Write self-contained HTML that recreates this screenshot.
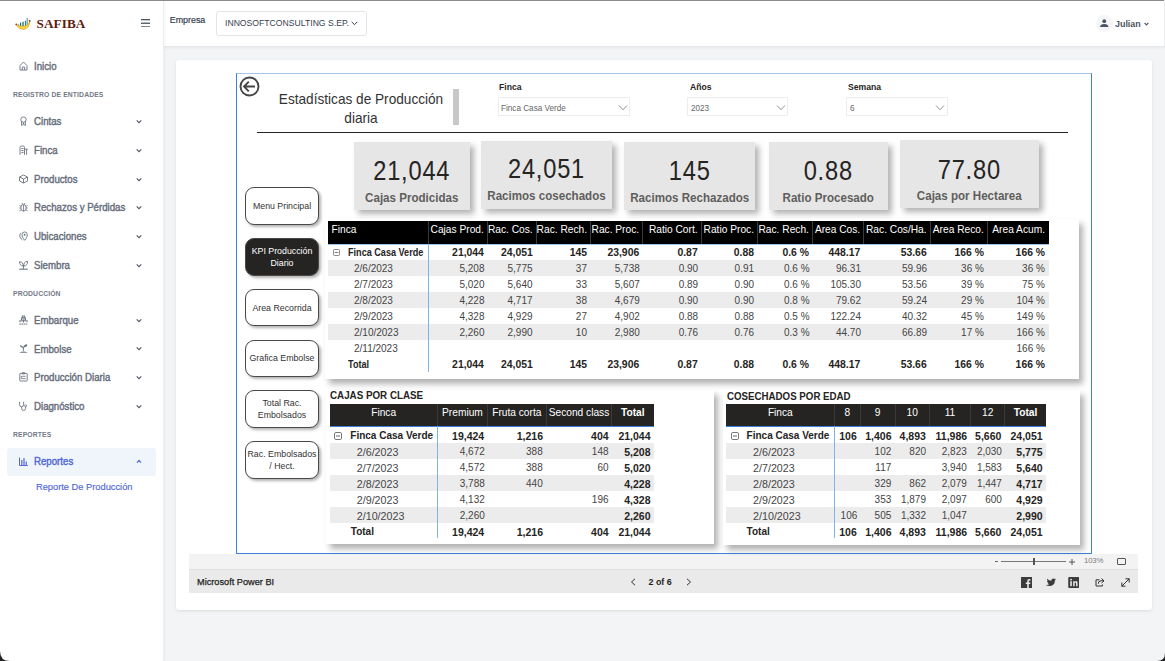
<!DOCTYPE html>
<html><head><meta charset="utf-8">
<style>
*{margin:0;padding:0;box-sizing:border-box}
html,body{width:1165px;height:661px;overflow:hidden}
body{position:relative;background:#f3f4f6;font-family:"Liberation Sans",sans-serif;color:#333}
.a{position:absolute;white-space:nowrap}
#topline{position:absolute;left:0;top:0;width:1165px;height:1px;background:#8a8a8a;z-index:50}
#sidebar{position:absolute;left:0;top:0;width:162.5px;height:661px;background:#fff;box-shadow:1px 0 0 #eceef1,2px 0 3px rgba(0,0,0,.04);z-index:5}
#header{position:absolute;left:163px;top:0;width:1002px;height:46px;background:#fff;box-shadow:0 1px 0 #e6e8eb,0 2px 3px rgba(0,0,0,.05);z-index:4}
.nav{position:absolute;left:0;width:163px;height:20px}
.nav .t{position:absolute;left:34px;top:5.3px;font-size:10.4px;font-weight:400;color:#666d7b;-webkit-text-stroke:.4px #666d7b;transform:scaleX(.93);transform-origin:0 0}
.nav .ic{position:absolute;left:19px;top:4.5px;width:9px;height:10px}
.nav .ch{position:absolute;left:136.3px;top:7.8px;width:6px;height:5px}
.sec{position:absolute;left:13px;font-size:6.8px;font-weight:700;color:#737a87;letter-spacing:.12px;margin-top:.7px}
#card{position:absolute;left:175.8px;top:59.5px;width:976.2px;height:550.5px;background:#fff;border-radius:3px;box-shadow:0 1px 3px rgba(0,0,0,.1)}
#blue{position:absolute;left:236px;top:73px;width:855.8px;height:481px;border:1.3px solid #3f80dc;border-top:1.1px solid #a6c6ee}
.kpi{position:absolute;top:142px;height:68px;background:#e6e6e6;box-shadow:4px 4px 6px rgba(0,0,0,.3)}
.kpi .v{position:absolute;left:0;right:0;top:12.7px;text-align:center;font-size:27.5px;color:#252423;letter-spacing:.9px;transform:scaleX(.86)}
.kpi .l{position:absolute;left:0;right:0;top:48.6px;text-align:center;font-size:12.2px;font-weight:700;color:#605e5c;transform:scaleX(.95)}
.btn{position:absolute;left:245px;width:74px;height:38px;border:1px solid #4a4948;border-radius:9px;background:#fff;box-shadow:2px 2px 3px rgba(0,0,0,.3);font-size:8.8px;color:#333;text-align:center;display:flex;align-items:center;justify-content:center;line-height:12px}
.btn.on{background:#252423;color:#fff}
.dd{position:absolute;top:97.3px;height:18.5px;border:1px solid #ededed;background:#fff}
.dd .tx{position:absolute;left:2.8px;top:4.2px;font-size:9.4px;color:#666;transform:scaleX(.87);transform-origin:0 0}
.ddl{position:absolute;top:80.6px;font-size:9.7px;font-weight:700;color:#252423;transform:scaleX(.89);transform-origin:0 0}
table{border-collapse:collapse;table-layout:fixed;position:absolute}
td,th{white-space:nowrap;overflow:visible;padding:0 3.5px;height:16px;text-align:right;font-size:10px;color:#333;font-weight:400}
</style></head><body>
<div id="topline"></div>
<div class="a" style="left:1164px;top:0;width:1px;height:46px;background:#eceef0;z-index:55"></div>

<!-- SIDEBAR -->
<div id="sidebar">
  <!-- logo -->
  <svg class="a" style="left:12px;top:14px" width="24" height="20" viewBox="0 0 24 20">
    <rect x="6.2" y="9.8" width="1.1" height="2" fill="#7fb8b8"/>
    <rect x="8" y="8.6" width="1.2" height="3.4" fill="#1f6f72"/>
    <rect x="10.4" y="7.8" width="1.3" height="4.2" fill="#1f6f72"/>
    <rect x="12.9" y="6.8" width="1.2" height="5" fill="#2f7f82"/>
    <rect x="14.5" y="4" width="1.5" height="7.5" fill="#7fb5b5"/>
    <path d="M4 10.2 Q6.5 15 11.5 15.3 Q16.8 15 17.9 7.2 Q16 12 11.5 12.6 Q7.2 12.8 4 10.2Z" fill="#f6df3f" stroke="#e69a1e" stroke-width=".8"/>
    <circle cx="4.3" cy="10.4" r=".9" fill="#9a4b12"/>
    <circle cx="17.6" cy="6.8" r=".9" fill="#7a3a10"/>
  </svg>
  <div class="a" style="left:36.5px;top:16px;font-family:'Liberation Serif',serif;font-weight:700;font-size:13.2px;color:#621a0e;letter-spacing:.1px">SAFIBA</div>
  <svg class="a" style="left:141px;top:18.7px" width="9.2" height="8.8" viewBox="0 0 9.2 8.8"><rect y="0" width="9.2" height="1.3" fill="#4b5563"/><rect y="3.6" width="9.2" height="1.3" fill="#4b5563"/><rect y="7.3" width="9.2" height="1.3" fill="#4b5563"/></svg>

  <div class="nav" style="top:56px"><svg class="ic" viewBox="0 0 9 10"><path d="M1 4.5 L4.5 1 L8 4.5 V9 H1Z M3.3 9 V6 H5.7 V9" stroke="#6b7280" stroke-width=".9" fill="none"/></svg><div class="t">Inicio</div></div>
  <div class="sec" style="top:90px">REGISTRO DE ENTIDADES</div>

  <div class="nav" style="top:111px"><svg class="ic" viewBox="0 0 9 10"><circle cx="4.5" cy="3.6" r="2.7" stroke="#6b7280" stroke-width=".9" fill="none"/><path d="M2.6 5.6 V9.5 L4.5 8.3 L6.4 9.5 V5.6 M4.5 6.4 V8.3" stroke="#6b7280" stroke-width=".9" fill="none"/></svg><div class="t">Cintas</div><svg class="ch" viewBox="0 0 6 5"><path d="M.7 1.3 L3 3.6 L5.3 1.3" stroke="#4b5563" stroke-width="1.1" fill="none"/></svg></div>
  <div class="nav" style="top:140px"><svg class="ic" viewBox="0 0 9 10"><path d="M1 9.8 V2.5 Q1 1 2.5 1 H4 Q5.5 1 5.5 2.5 V9.8 M2.3 3.6 H4.5 M2.3 5.6 H4.5 M2.3 7.6 H4.5 M5.5 4.2 H8.8 M7.6 4.2 V9.8" stroke="#6b7280" stroke-width=".9" fill="none"/></svg><div class="t">Finca</div><svg class="ch" viewBox="0 0 6 5"><path d="M.7 1.3 L3 3.6 L5.3 1.3" stroke="#4b5563" stroke-width="1.1" fill="none"/></svg></div>
  <div class="nav" style="top:169px"><svg class="ic" viewBox="0 0 9 10"><path d="M4.5 1 L8.5 3 V7 L4.5 9 L.5 7 V3Z M.5 3 L4.5 5 L8.5 3 M4.5 5 V9" stroke="#6b7280" stroke-width=".9" fill="none"/></svg><div class="t">Productos</div><svg class="ch" viewBox="0 0 6 5"><path d="M.7 1.3 L3 3.6 L5.3 1.3" stroke="#4b5563" stroke-width="1.1" fill="none"/></svg></div>
  <div class="nav" style="top:197px"><svg class="ic" viewBox="0 0 9 10"><ellipse cx="4.5" cy="5.8" rx="2.6" ry="3.4" stroke="#6b7280" stroke-width=".9" fill="none"/><path d="M3 1 L3.6 2.5 M6 1 L5.4 2.5 M.3 3.5 L1.9 4.3 M.2 6 H1.9 M.3 9 L2 7.8 M8.7 3.5 L7.1 4.3 M8.8 6 H7.1 M8.7 9 L7 7.8 M4.5 3 V9.2" stroke="#6b7280" stroke-width=".8" fill="none"/></svg><div class="t">Rechazos y Pérdidas</div><svg class="ch" viewBox="0 0 6 5"><path d="M.7 1.3 L3 3.6 L5.3 1.3" stroke="#4b5563" stroke-width="1.1" fill="none"/></svg></div>
  <div class="nav" style="top:226px"><svg class="ic" viewBox="0 0 9 10"><path d="M5.65 9.3 C3.7 7.1 3 5.6 3 3.6 A2.65 2.65 0 0 1 8.3 3.6 C8.3 5.6 7.6 7.1 5.65 9.3Z M2.1 1.9 C.1 3.2 .2 6.6 3.5 9.1" stroke="#6b7280" stroke-width=".9" fill="none"/><circle cx="5.65" cy="3.7" r=".95" fill="#6b7280"/></svg><div class="t">Ubicaciones</div><svg class="ch" viewBox="0 0 6 5"><path d="M.7 1.3 L3 3.6 L5.3 1.3" stroke="#4b5563" stroke-width="1.1" fill="none"/></svg></div>
  <div class="nav" style="top:255px"><svg class="ic" viewBox="0 0 9 10"><path d="M4.2 6 C1.6 6 .6 4.2 .6 1.7 C3 1.7 4.2 3.2 4.2 6Z M4.7 6 C7.6 6 8.6 3.8 8.6 1.3 C5.8 1.3 4.7 3.2 4.7 6Z M4.45 5 V9" stroke="#6b7280" stroke-width=".9" fill="none"/><path d="M.3 9.2 H8.7" stroke="#6b7280" stroke-width="1.1"/></svg><div class="t">Siembra</div><svg class="ch" viewBox="0 0 6 5"><path d="M.7 1.3 L3 3.6 L5.3 1.3" stroke="#4b5563" stroke-width="1.1" fill="none"/></svg></div>
  <div class="sec" style="top:289px">PRODUCCIÓN</div>
  <div class="nav" style="top:310px"><svg class="ic" viewBox="0 0 9 10"><rect x="3.3" y="1" width="2.4" height="1.8" stroke="#6b7280" stroke-width=".9" fill="none"/><rect x="2.4" y="2.9" width="4.2" height="2" stroke="#6b7280" stroke-width=".9" fill="none"/><path d="M.4 5.8 H8.6 L7.6 7.2 M.4 5.8 L1.4 7.2 M4.5 5 V7.6" stroke="#6b7280" stroke-width=".9" fill="none"/><path d="M.3 9.1 H8.7" stroke="#6b7280" stroke-width="1" stroke-dasharray="1.6 .5" fill="none"/></svg><div class="t">Embarque</div><svg class="ch" viewBox="0 0 6 5"><path d="M.7 1.3 L3 3.6 L5.3 1.3" stroke="#4b5563" stroke-width="1.1" fill="none"/></svg></div>
  <div class="nav" style="top:338.5px"><svg class="ic" viewBox="0 0 9 10"><path d="M4.4 7.8 V3.6" stroke="#6b7280" stroke-width="1" fill="none"/><path d="M4.2 4.8 Q1.2 5.3 .9 2.2 Q3.8 2 4.2 4.8Z M4.6 4.3 Q8.2 4.8 8.2 1.3 Q5 1.2 4.6 4.3Z" fill="#6b7280"/><path d="M.2 9.8 Q4.5 7.4 8.8 9.8Z" fill="#6b7280"/></svg><div class="t">Embolse</div><svg class="ch" viewBox="0 0 6 5"><path d="M.7 1.3 L3 3.6 L5.3 1.3" stroke="#4b5563" stroke-width="1.1" fill="none"/></svg></div>
  <div class="nav" style="top:367px"><svg class="ic" viewBox="0 0 9 10"><rect x=".8" y="1.4" width="7.4" height="7.6" rx=".6" stroke="#6b7280" stroke-width=".9" fill="none"/><path d="M3.3 .6 H5.7 V2 H3.3Z M2.3 4.3 H6.7 M2.3 6.6 H6.7 M2.3 4.3 V6.6" stroke="#6b7280" stroke-width=".8" fill="none"/></svg><div class="t">Producción Diaria</div><svg class="ch" viewBox="0 0 6 5"><path d="M.7 1.3 L3 3.6 L5.3 1.3" stroke="#4b5563" stroke-width="1.1" fill="none"/></svg></div>
  <div class="nav" style="top:396px"><svg class="ic" viewBox="0 0 9 10"><path d="M.6 .8 V3.8 A2 2 0 0 0 4.6 3.8 V.8 M2.6 5.8 V7.4 A1.9 1.9 0 0 0 6.6 7.4 V5.8" stroke="#6b7280" stroke-width=".9" fill="none"/><circle cx="6.6" cy="4.8" r="1" stroke="#6b7280" stroke-width=".8" fill="none"/></svg><div class="t">Diagnóstico</div><svg class="ch" viewBox="0 0 6 5"><path d="M.7 1.3 L3 3.6 L5.3 1.3" stroke="#4b5563" stroke-width="1.1" fill="none"/></svg></div>
  <div class="sec" style="top:430px">REPORTES</div>
  <div class="a" style="left:6.5px;top:447.5px;width:149.5px;height:28px;background:#f0f5fb;border-radius:3px"></div>
  <div class="nav" style="top:451px"><svg class="ic" viewBox="0 0 9 10"><path d="M.5 1.5 V9.5 H8.8" stroke="#5469d4" stroke-width="1" fill="none"/><rect x="2.2" y="4" width="1.2" height="5" fill="#5469d4"/><rect x="4.4" y="2" width="1.2" height="7" fill="#5469d4"/><rect x="6.6" y="5.5" width="1.2" height="3.5" fill="#5469d4"/></svg><div class="t" style="color:#4f67d6;-webkit-text-stroke:.4px #4f67d6">Reportes</div><svg class="ch" viewBox="0 0 5 5"><path d="M.5 3.6 L2.5 1.5 L4.5 3.6" stroke="#5469d4" stroke-width="1.3" fill="none"/></svg></div>
  <div class="a" style="left:36px;top:481.1px;font-size:9.9px;color:#4f67d6;transform:scaleX(.94);transform-origin:0 0;-webkit-text-stroke:.15px #4f67d6">Reporte De Producción</div>
</div>

<!-- HEADER -->
<div id="header">
  <div class="a" style="left:6.8px;top:14.5px;font-size:8.9px;color:#374151;-webkit-text-stroke:.2px #374151">Empresa</div>
  <div class="a" style="left:53.3px;top:10.6px;width:150.5px;height:25px;border:1px solid #e3e5e9;border-radius:3px;background:#fff"></div>
  <div class="a" style="left:61.8px;top:17px;font-size:9.6px;color:#374151;transform:scaleX(.9);transform-origin:0 0">INNOSOFTCONSULTING S.EP.</div>
  <svg class="a" style="left:187.5px;top:21px" width="7" height="5" viewBox="0 0 7 5"><path d="M.6 .8 L3.5 3.7 L6.4 .8" stroke="#374151" stroke-width="1" fill="none"/></svg>
  <div class="a" style="left:933px;top:14.8px;width:16.5px;height:17px;border-radius:50%;background:#f5f6f8"></div>
  <svg class="a" style="left:937px;top:18.5px" width="8.5" height="8.5" viewBox="0 0 8 8"><circle cx="4" cy="2" r="1.8" fill="#4b5563"/><path d="M0 8 Q0 4.6 4 4.6 Q8 4.6 8 8Z" fill="#4b5563"/></svg>
  <div class="a" style="left:951.5px;top:17.5px;font-size:9.4px;font-weight:700;color:#4b5563;transform:scaleX(.95);transform-origin:0 0">Julian</div>
  <svg class="a" style="left:980.5px;top:22px" width="5" height="4" viewBox="0 0 5 4"><path d="M.6 .8 L2.5 2.8 L4.4 .8" stroke="#4b5563" stroke-width="1.2" fill="none"/></svg>
</div>

<!-- CARD -->
<div id="card"></div>
<!-- pbi bars -->
<div class="a" style="left:189px;top:554px;width:949px;height:15px;background:#f3f3f3"></div>
<div class="a" style="left:189px;top:569px;width:949px;height:24px;background:#eaeaea;border-top:1px solid #dedede"></div>
<div class="a" style="left:197px;top:576.5px;font-size:9.2px;color:#1e1e1e;-webkit-text-stroke:.25px #1e1e1e">Microsoft Power BI</div>
<svg class="a" style="left:630px;top:578px" width="6" height="8" viewBox="0 0 6 8"><path d="M5 .8 L1.5 4 L5 7.2" stroke="#333" stroke-width="1" fill="none"/></svg>
<div class="a" style="left:648.5px;top:577px;font-size:8.9px;font-weight:700;color:#252423">2 of 6</div>
<svg class="a" style="left:685.5px;top:578px" width="6" height="8" viewBox="0 0 6 8"><path d="M1 .8 L4.5 4 L1 7.2" stroke="#333" stroke-width="1" fill="none"/></svg>
<!-- zoom bar -->
<div class="a" style="left:995px;top:561px;width:3px;height:1px;background:#666"></div>
<div class="a" style="left:1001px;top:561px;width:64.5px;height:1px;background:#777"></div>
<div class="a" style="left:1032.8px;top:558px;width:2.6px;height:6.5px;background:#555"></div>
<svg class="a" style="left:1069px;top:558.5px" width="6" height="6" viewBox="0 0 6 6"><path d="M0 3 H6 M3 0 V6" stroke="#555" stroke-width="1"/></svg>
<div class="a" style="left:1084px;top:556.3px;font-size:7.8px;color:#7c7c7c;letter-spacing:-.2px">103%</div>
<div class="a" style="left:1117px;top:558px;width:9px;height:6.8px;border:1px solid #555;border-left-width:1.6px;border-right-width:1.6px;border-radius:1px"></div>
<!-- footer icons -->
<svg class="a" style="left:1021px;top:577px" width="11" height="11" viewBox="0 0 11 11"><rect width="11" height="11" fill="#3b3b3b"/><path d="M7.8 11 V7 H9.2 L9.5 5.4 H7.8 V4.4 Q7.8 3.6 8.6 3.6 H9.5 V2.2 Q8.9 2.1 8.2 2.1 Q6.2 2.1 6.2 4.2 V5.4 H4.8 V7 H6.2 V11Z" fill="#eaeaea"/></svg>
<svg class="a" style="left:1044.5px;top:577.5px" width="11" height="9.5" viewBox="0 0 24 20"><path d="M24 2.4 Q22.9 2.9 21.7 3 Q23 2.2 23.5 .8 Q22.3 1.5 20.9 1.8 Q19.7 .5 17.9 .5 Q14.1 .5 13.9 4.6 Q13.9 5.1 14 5.5 Q8.4 5.2 4.9 1 Q3.3 4 6.2 6.5 Q5.2 6.5 4.3 6 Q4.3 9.3 7.6 10 Q6.6 10.3 5.7 10.1 Q6.6 12.8 9.5 12.9 Q6.2 15.3 1.8 14.9 Q5.9 17.3 11 17 Q21.6 16.1 21.6 5.2 Q21.6 5 21.6 4.9 Q23 3.9 24 2.4Z" fill="#3b3b3b"/></svg>
<svg class="a" style="left:1067.5px;top:577px" width="11.5" height="11" viewBox="0 0 11 11"><rect width="11" height="11" rx="1" fill="#3b3b3b"/><rect x="2" y="4.2" width="1.6" height="5" fill="#eaeaea"/><circle cx="2.8" cy="2.6" r=".95" fill="#eaeaea"/><path d="M4.9 4.2 H6.4 V5 Q6.9 4.1 7.9 4.1 Q9.3 4.1 9.3 5.9 V9.2 H7.8 V6.3 Q7.8 5.4 7.1 5.4 Q6.4 5.4 6.4 6.3 V9.2 H4.9Z" fill="#eaeaea"/></svg>
<svg class="a" style="left:1094.5px;top:577px" width="10" height="10" viewBox="0 0 10 10"><path d="M6.5 1.5 L9 3.8 L6.5 6 M9 3.8 H6 Q3.2 3.8 3.2 6.8" stroke="#333" stroke-width="1" fill="none"/><path d="M4.5 2.8 H1 V9 H7.5 V7.5" stroke="#333" stroke-width="1" fill="none"/></svg>
<svg class="a" style="left:1120.5px;top:578px" width="9" height="9" viewBox="0 0 9 9"><path d="M.8 8.2 L8.2 .8 M4.5 .8 H8.2 V4.5 M.8 4.5 V8.2 H4.5" stroke="#333" stroke-width="1" fill="none"/></svg>
<!-- window corner -->
<svg class="a" style="left:0;top:651px;z-index:60" width="10" height="10" viewBox="0 0 10 10"><path d="M0 0 Q0 10 10 10 H0Z" fill="#222"/></svg>
<svg class="a" style="left:1157px;top:653px;z-index:60" width="8" height="8" viewBox="0 0 10 10"><path d="M10 0 Q10 10 0 10 H10Z" fill="#222"/></svg>

<div id="blue"></div>

<!-- REPORT CONTENT -->
<svg class="a" style="left:239px;top:76px" width="21" height="21" viewBox="0 0 21 21"><circle cx="10.5" cy="10.5" r="9" stroke="#454545" stroke-width="1.9" fill="none"/><path d="M5.2 10.5 H16 M9.8 5.6 L5 10.5 L9.8 15.4" stroke="#454545" stroke-width="1.9" fill="none"/></svg>
<div class="a" style="left:271.3px;top:90.1px;font-size:14.5px;color:#333;line-height:18.5px;text-align:center;width:180px;transform:scaleX(.94)">Estadísticas de Producción<br>diaria</div>
<div class="a" style="left:453px;top:89px;width:5.5px;height:36px;background:#c8c8c8"></div>
<div class="a" style="left:257px;top:131.5px;width:811px;height:1.8px;background:#252423"></div>

<div class="ddl" style="left:498.5px">Finca</div>
<div class="dd" style="left:497.5px;width:132.5px"><div class="tx">Finca Casa Verde</div><svg class="a" style="left:119px;top:6.5px" width="10" height="6" viewBox="0 0 10 6"><path d="M1 .5 L5 4.8 L9 .5" stroke="#888" stroke-width=".9" fill="none"/></svg></div>
<div class="ddl" style="left:689.5px">Años</div>
<div class="dd" style="left:687.3px;width:101px"><div class="tx">2023</div><svg class="a" style="left:87.5px;top:6.5px" width="10" height="6" viewBox="0 0 10 6"><path d="M1 .5 L5 4.8 L9 .5" stroke="#888" stroke-width=".9" fill="none"/></svg></div>
<div class="ddl" style="left:847.8px">Semana</div>
<div class="dd" style="left:846.3px;width:101.5px"><div class="tx">6</div><svg class="a" style="left:87.5px;top:6.5px" width="10" height="6" viewBox="0 0 10 6"><path d="M1 .5 L5 4.8 L9 .5" stroke="#888" stroke-width=".9" fill="none"/></svg></div>

<div class="kpi" style="left:354px;width:115.5px"><div class="v">21,044</div><div class="l">Cajas Prodicidas</div></div>
<div class="kpi" style="left:481px;width:131px;top:140.5px"><div class="v" style="top:12.8px">24,051</div><div class="l" style="top:48.6px">Racimos cosechados</div></div>
<div class="kpi" style="left:623.5px;width:131.5px"><div class="v">145</div><div class="l">Racimos Rechazados</div></div>
<div class="kpi" style="left:769px;width:118.5px"><div class="v">0.88</div><div class="l">Ratio Procesado</div></div>
<div class="kpi" style="left:900.4px;width:138.6px;top:140.4px"><div class="v" style="top:13.2px">77.80</div><div class="l" style="top:48.5px">Cajas por Hectarea</div></div>

<div class="btn" style="top:187px">Menu Principal</div>
<div class="btn on" style="top:238px;height:37.5px">KPI Producción<br>Diario</div>
<div class="btn" style="top:288.8px;height:37.5px">Area Recorrida</div>
<div class="btn" style="top:339.8px;height:37px">Grafica Embolse</div>
<div class="btn" style="top:390px;height:38px">Total Rac.<br>Embolsados</div>
<div class="btn" style="top:441px;height:37.5px">Rac. Embolsados<br>/ Hect.</div>

<!-- MAIN TABLE -->
<div class="a" style="left:325px;top:218.5px;width:753.5px;height:160px;background:#fff;box-shadow:4px 5px 6px rgba(0,0,0,.3)"></div>
<div class="a" style="left:328px;top:221px;width:720.5999999999999px;height:23px;background:#000"></div>
<div class="a" style="left:428.1px;top:221px;width:1px;height:23px;background:#3a3a3a"></div>
<div class="a" style="left:486.9px;top:221px;width:1px;height:23px;background:#3a3a3a"></div>
<div class="a" style="left:535.8px;top:221px;width:1px;height:23px;background:#3a3a3a"></div>
<div class="a" style="left:590.1px;top:221px;width:1px;height:23px;background:#3a3a3a"></div>
<div class="a" style="left:642.2px;top:221px;width:1px;height:23px;background:#3a3a3a"></div>
<div class="a" style="left:700.7px;top:221px;width:1px;height:23px;background:#3a3a3a"></div>
<div class="a" style="left:757.1px;top:221px;width:1px;height:23px;background:#3a3a3a"></div>
<div class="a" style="left:812.0px;top:221px;width:1px;height:23px;background:#3a3a3a"></div>
<div class="a" style="left:863.3px;top:221px;width:1px;height:23px;background:#3a3a3a"></div>
<div class="a" style="left:929.7px;top:221px;width:1px;height:23px;background:#3a3a3a"></div>
<div class="a" style="left:986.9px;top:221px;width:1px;height:23px;background:#3a3a3a"></div>
<div class="a" style="left:328px;top:260px;width:720.5999999999999px;height:16px;background:#ececec"></div>
<div class="a" style="left:328px;top:292px;width:720.5999999999999px;height:16px;background:#ececec"></div>
<div class="a" style="left:328px;top:324px;width:720.5999999999999px;height:16px;background:#ececec"></div>
<div class="a" style="left:328px;top:243.7px;width:720.5999999999999px;height:1.2px;background:#9cc6f3"></div>
<div class="a" style="left:427.90000000000003px;top:244px;width:1.3px;height:128px;background:#7fb3ec"></div>
<div class="a" style="left:328px;top:218.1px;width:100.60000000000002px;height:23px;line-height:23px;text-align:left;font-size:10.2px;color:#fff;padding-left:3.6px;">Finca</div>
<div class="a" style="left:428.6px;top:218.1px;width:58.799999999999955px;height:23px;line-height:23px;text-align:right;font-size:10.2px;color:#fff;padding-right:3.6px;">Cajas Prod.</div>
<div class="a" style="left:487.4px;top:218.1px;width:48.89999999999998px;height:23px;line-height:23px;text-align:right;font-size:10.2px;color:#fff;padding-right:3.6px;">Rac. Cos.</div>
<div class="a" style="left:536.3px;top:218.1px;width:54.30000000000007px;height:23px;line-height:23px;text-align:right;font-size:10.2px;color:#fff;padding-right:3.6px;">Rac. Rech.</div>
<div class="a" style="left:590.6px;top:218.1px;width:52.10000000000002px;height:23px;line-height:23px;text-align:right;font-size:10.2px;color:#fff;padding-right:3.6px;">Rac. Proc.</div>
<div class="a" style="left:642.7px;top:218.1px;width:58.5px;height:23px;line-height:23px;text-align:right;font-size:10.2px;color:#fff;padding-right:3.6px;">Ratio Cort.</div>
<div class="a" style="left:701.2px;top:218.1px;width:56.39999999999998px;height:23px;line-height:23px;text-align:right;font-size:10.2px;color:#fff;padding-right:3.6px;">Ratio Proc.</div>
<div class="a" style="left:757.6px;top:218.1px;width:54.89999999999998px;height:23px;line-height:23px;text-align:right;font-size:10.2px;color:#fff;padding-right:3.6px;">Rac. Rech.</div>
<div class="a" style="left:812.5px;top:218.1px;width:51.299999999999955px;height:23px;line-height:23px;text-align:right;font-size:10.2px;color:#fff;padding-right:3.6px;">Area Cos.</div>
<div class="a" style="left:863.8px;top:218.1px;width:66.40000000000009px;height:23px;line-height:23px;text-align:right;font-size:10.2px;color:#fff;padding-right:3.6px;">Rac. Cos/Ha.</div>
<div class="a" style="left:930.2px;top:218.1px;width:57.19999999999993px;height:23px;line-height:23px;text-align:right;font-size:10.2px;color:#fff;padding-right:3.6px;">Area Reco.</div>
<div class="a" style="left:987.4px;top:218.1px;width:61.19999999999993px;height:23px;line-height:23px;text-align:right;font-size:10.2px;color:#fff;padding-right:3.6px;">Area Acum.</div>
<svg class="a" style="left:333px;top:249.0px" width="7" height="7" viewBox="0 0 8 8"><rect x=".5" y=".5" width="7" height="7" rx="1.3" stroke="#555" stroke-width=".8" fill="none"/><path d="M2 4 H6" stroke="#555" stroke-width=".9"/></svg>
<div class="a" style="left:348px;top:245.2px;width:80.60000000000002px;height:16px;line-height:16px;text-align:left;font-size:10.4px;color:#252423;transform:scaleX(0.875);transform-origin:0 50%;font-weight:700;padding-left:0px;">Finca Casa Verde</div>
<div class="a" style="left:428.6px;top:245.2px;width:58.799999999999955px;height:16px;line-height:16px;text-align:right;font-size:10.4px;color:#252423;font-weight:700;padding-right:3.5px;">21,044</div>
<div class="a" style="left:487.4px;top:245.2px;width:48.89999999999998px;height:16px;line-height:16px;text-align:right;font-size:10.4px;color:#252423;font-weight:700;padding-right:3.5px;">24,051</div>
<div class="a" style="left:536.3px;top:245.2px;width:54.30000000000007px;height:16px;line-height:16px;text-align:right;font-size:10.4px;color:#252423;font-weight:700;padding-right:3.5px;">145</div>
<div class="a" style="left:590.6px;top:245.2px;width:52.10000000000002px;height:16px;line-height:16px;text-align:right;font-size:10.4px;color:#252423;font-weight:700;padding-right:3.5px;">23,906</div>
<div class="a" style="left:642.7px;top:245.2px;width:58.5px;height:16px;line-height:16px;text-align:right;font-size:10.4px;color:#252423;font-weight:700;padding-right:3.5px;">0.87</div>
<div class="a" style="left:701.2px;top:245.2px;width:56.39999999999998px;height:16px;line-height:16px;text-align:right;font-size:10.4px;color:#252423;font-weight:700;padding-right:3.5px;">0.88</div>
<div class="a" style="left:757.6px;top:245.2px;width:54.89999999999998px;height:16px;line-height:16px;text-align:right;font-size:10.4px;color:#252423;font-weight:700;padding-right:3.5px;">0.6 %</div>
<div class="a" style="left:812.5px;top:245.2px;width:51.299999999999955px;height:16px;line-height:16px;text-align:right;font-size:10.4px;color:#252423;font-weight:700;padding-right:3.5px;">448.17</div>
<div class="a" style="left:863.8px;top:245.2px;width:66.40000000000009px;height:16px;line-height:16px;text-align:right;font-size:10.4px;color:#252423;font-weight:700;padding-right:3.5px;">53.66</div>
<div class="a" style="left:930.2px;top:245.2px;width:57.19999999999993px;height:16px;line-height:16px;text-align:right;font-size:10.4px;color:#252423;font-weight:700;padding-right:3.5px;">166 %</div>
<div class="a" style="left:987.4px;top:245.2px;width:61.19999999999993px;height:16px;line-height:16px;text-align:right;font-size:10.4px;color:#252423;font-weight:700;padding-right:3.5px;">166 %</div>
<div class="a" style="left:354px;top:261.2px;width:74.60000000000002px;height:16px;line-height:16px;text-align:left;font-size:10px;color:#444;padding-left:0px;">2/6/2023</div>
<div class="a" style="left:428.6px;top:261.2px;width:58.799999999999955px;height:16px;line-height:16px;text-align:right;font-size:10.4px;color:#444;transform:scaleX(0.96);transform-origin:100% 50%;padding-right:3.5px;">5,208</div>
<div class="a" style="left:487.4px;top:261.2px;width:48.89999999999998px;height:16px;line-height:16px;text-align:right;font-size:10.4px;color:#444;transform:scaleX(0.96);transform-origin:100% 50%;padding-right:3.5px;">5,775</div>
<div class="a" style="left:536.3px;top:261.2px;width:54.30000000000007px;height:16px;line-height:16px;text-align:right;font-size:10.4px;color:#444;transform:scaleX(0.96);transform-origin:100% 50%;padding-right:3.5px;">37</div>
<div class="a" style="left:590.6px;top:261.2px;width:52.10000000000002px;height:16px;line-height:16px;text-align:right;font-size:10.4px;color:#444;transform:scaleX(0.96);transform-origin:100% 50%;padding-right:3.5px;">5,738</div>
<div class="a" style="left:642.7px;top:261.2px;width:58.5px;height:16px;line-height:16px;text-align:right;font-size:10.4px;color:#444;transform:scaleX(0.96);transform-origin:100% 50%;padding-right:3.5px;">0.90</div>
<div class="a" style="left:701.2px;top:261.2px;width:56.39999999999998px;height:16px;line-height:16px;text-align:right;font-size:10.4px;color:#444;transform:scaleX(0.96);transform-origin:100% 50%;padding-right:3.5px;">0.91</div>
<div class="a" style="left:757.6px;top:261.2px;width:54.89999999999998px;height:16px;line-height:16px;text-align:right;font-size:10.4px;color:#444;transform:scaleX(0.96);transform-origin:100% 50%;padding-right:3.5px;">0.6 %</div>
<div class="a" style="left:812.5px;top:261.2px;width:51.299999999999955px;height:16px;line-height:16px;text-align:right;font-size:10.4px;color:#444;transform:scaleX(0.96);transform-origin:100% 50%;padding-right:3.5px;">96.31</div>
<div class="a" style="left:863.8px;top:261.2px;width:66.40000000000009px;height:16px;line-height:16px;text-align:right;font-size:10.4px;color:#444;transform:scaleX(0.96);transform-origin:100% 50%;padding-right:3.5px;">59.96</div>
<div class="a" style="left:930.2px;top:261.2px;width:57.19999999999993px;height:16px;line-height:16px;text-align:right;font-size:10.4px;color:#444;transform:scaleX(0.96);transform-origin:100% 50%;padding-right:3.5px;">36 %</div>
<div class="a" style="left:987.4px;top:261.2px;width:61.19999999999993px;height:16px;line-height:16px;text-align:right;font-size:10.4px;color:#444;transform:scaleX(0.96);transform-origin:100% 50%;padding-right:3.5px;">36 %</div>
<div class="a" style="left:354px;top:277.2px;width:74.60000000000002px;height:16px;line-height:16px;text-align:left;font-size:10px;color:#444;padding-left:0px;">2/7/2023</div>
<div class="a" style="left:428.6px;top:277.2px;width:58.799999999999955px;height:16px;line-height:16px;text-align:right;font-size:10.4px;color:#444;transform:scaleX(0.96);transform-origin:100% 50%;padding-right:3.5px;">5,020</div>
<div class="a" style="left:487.4px;top:277.2px;width:48.89999999999998px;height:16px;line-height:16px;text-align:right;font-size:10.4px;color:#444;transform:scaleX(0.96);transform-origin:100% 50%;padding-right:3.5px;">5,640</div>
<div class="a" style="left:536.3px;top:277.2px;width:54.30000000000007px;height:16px;line-height:16px;text-align:right;font-size:10.4px;color:#444;transform:scaleX(0.96);transform-origin:100% 50%;padding-right:3.5px;">33</div>
<div class="a" style="left:590.6px;top:277.2px;width:52.10000000000002px;height:16px;line-height:16px;text-align:right;font-size:10.4px;color:#444;transform:scaleX(0.96);transform-origin:100% 50%;padding-right:3.5px;">5,607</div>
<div class="a" style="left:642.7px;top:277.2px;width:58.5px;height:16px;line-height:16px;text-align:right;font-size:10.4px;color:#444;transform:scaleX(0.96);transform-origin:100% 50%;padding-right:3.5px;">0.89</div>
<div class="a" style="left:701.2px;top:277.2px;width:56.39999999999998px;height:16px;line-height:16px;text-align:right;font-size:10.4px;color:#444;transform:scaleX(0.96);transform-origin:100% 50%;padding-right:3.5px;">0.90</div>
<div class="a" style="left:757.6px;top:277.2px;width:54.89999999999998px;height:16px;line-height:16px;text-align:right;font-size:10.4px;color:#444;transform:scaleX(0.96);transform-origin:100% 50%;padding-right:3.5px;">0.6 %</div>
<div class="a" style="left:812.5px;top:277.2px;width:51.299999999999955px;height:16px;line-height:16px;text-align:right;font-size:10.4px;color:#444;transform:scaleX(0.96);transform-origin:100% 50%;padding-right:3.5px;">105.30</div>
<div class="a" style="left:863.8px;top:277.2px;width:66.40000000000009px;height:16px;line-height:16px;text-align:right;font-size:10.4px;color:#444;transform:scaleX(0.96);transform-origin:100% 50%;padding-right:3.5px;">53.56</div>
<div class="a" style="left:930.2px;top:277.2px;width:57.19999999999993px;height:16px;line-height:16px;text-align:right;font-size:10.4px;color:#444;transform:scaleX(0.96);transform-origin:100% 50%;padding-right:3.5px;">39 %</div>
<div class="a" style="left:987.4px;top:277.2px;width:61.19999999999993px;height:16px;line-height:16px;text-align:right;font-size:10.4px;color:#444;transform:scaleX(0.96);transform-origin:100% 50%;padding-right:3.5px;">75 %</div>
<div class="a" style="left:354px;top:293.2px;width:74.60000000000002px;height:16px;line-height:16px;text-align:left;font-size:10px;color:#444;padding-left:0px;">2/8/2023</div>
<div class="a" style="left:428.6px;top:293.2px;width:58.799999999999955px;height:16px;line-height:16px;text-align:right;font-size:10.4px;color:#444;transform:scaleX(0.96);transform-origin:100% 50%;padding-right:3.5px;">4,228</div>
<div class="a" style="left:487.4px;top:293.2px;width:48.89999999999998px;height:16px;line-height:16px;text-align:right;font-size:10.4px;color:#444;transform:scaleX(0.96);transform-origin:100% 50%;padding-right:3.5px;">4,717</div>
<div class="a" style="left:536.3px;top:293.2px;width:54.30000000000007px;height:16px;line-height:16px;text-align:right;font-size:10.4px;color:#444;transform:scaleX(0.96);transform-origin:100% 50%;padding-right:3.5px;">38</div>
<div class="a" style="left:590.6px;top:293.2px;width:52.10000000000002px;height:16px;line-height:16px;text-align:right;font-size:10.4px;color:#444;transform:scaleX(0.96);transform-origin:100% 50%;padding-right:3.5px;">4,679</div>
<div class="a" style="left:642.7px;top:293.2px;width:58.5px;height:16px;line-height:16px;text-align:right;font-size:10.4px;color:#444;transform:scaleX(0.96);transform-origin:100% 50%;padding-right:3.5px;">0.90</div>
<div class="a" style="left:701.2px;top:293.2px;width:56.39999999999998px;height:16px;line-height:16px;text-align:right;font-size:10.4px;color:#444;transform:scaleX(0.96);transform-origin:100% 50%;padding-right:3.5px;">0.90</div>
<div class="a" style="left:757.6px;top:293.2px;width:54.89999999999998px;height:16px;line-height:16px;text-align:right;font-size:10.4px;color:#444;transform:scaleX(0.96);transform-origin:100% 50%;padding-right:3.5px;">0.8 %</div>
<div class="a" style="left:812.5px;top:293.2px;width:51.299999999999955px;height:16px;line-height:16px;text-align:right;font-size:10.4px;color:#444;transform:scaleX(0.96);transform-origin:100% 50%;padding-right:3.5px;">79.62</div>
<div class="a" style="left:863.8px;top:293.2px;width:66.40000000000009px;height:16px;line-height:16px;text-align:right;font-size:10.4px;color:#444;transform:scaleX(0.96);transform-origin:100% 50%;padding-right:3.5px;">59.24</div>
<div class="a" style="left:930.2px;top:293.2px;width:57.19999999999993px;height:16px;line-height:16px;text-align:right;font-size:10.4px;color:#444;transform:scaleX(0.96);transform-origin:100% 50%;padding-right:3.5px;">29 %</div>
<div class="a" style="left:987.4px;top:293.2px;width:61.19999999999993px;height:16px;line-height:16px;text-align:right;font-size:10.4px;color:#444;transform:scaleX(0.96);transform-origin:100% 50%;padding-right:3.5px;">104 %</div>
<div class="a" style="left:354px;top:309.2px;width:74.60000000000002px;height:16px;line-height:16px;text-align:left;font-size:10px;color:#444;padding-left:0px;">2/9/2023</div>
<div class="a" style="left:428.6px;top:309.2px;width:58.799999999999955px;height:16px;line-height:16px;text-align:right;font-size:10.4px;color:#444;transform:scaleX(0.96);transform-origin:100% 50%;padding-right:3.5px;">4,328</div>
<div class="a" style="left:487.4px;top:309.2px;width:48.89999999999998px;height:16px;line-height:16px;text-align:right;font-size:10.4px;color:#444;transform:scaleX(0.96);transform-origin:100% 50%;padding-right:3.5px;">4,929</div>
<div class="a" style="left:536.3px;top:309.2px;width:54.30000000000007px;height:16px;line-height:16px;text-align:right;font-size:10.4px;color:#444;transform:scaleX(0.96);transform-origin:100% 50%;padding-right:3.5px;">27</div>
<div class="a" style="left:590.6px;top:309.2px;width:52.10000000000002px;height:16px;line-height:16px;text-align:right;font-size:10.4px;color:#444;transform:scaleX(0.96);transform-origin:100% 50%;padding-right:3.5px;">4,902</div>
<div class="a" style="left:642.7px;top:309.2px;width:58.5px;height:16px;line-height:16px;text-align:right;font-size:10.4px;color:#444;transform:scaleX(0.96);transform-origin:100% 50%;padding-right:3.5px;">0.88</div>
<div class="a" style="left:701.2px;top:309.2px;width:56.39999999999998px;height:16px;line-height:16px;text-align:right;font-size:10.4px;color:#444;transform:scaleX(0.96);transform-origin:100% 50%;padding-right:3.5px;">0.88</div>
<div class="a" style="left:757.6px;top:309.2px;width:54.89999999999998px;height:16px;line-height:16px;text-align:right;font-size:10.4px;color:#444;transform:scaleX(0.96);transform-origin:100% 50%;padding-right:3.5px;">0.5 %</div>
<div class="a" style="left:812.5px;top:309.2px;width:51.299999999999955px;height:16px;line-height:16px;text-align:right;font-size:10.4px;color:#444;transform:scaleX(0.96);transform-origin:100% 50%;padding-right:3.5px;">122.24</div>
<div class="a" style="left:863.8px;top:309.2px;width:66.40000000000009px;height:16px;line-height:16px;text-align:right;font-size:10.4px;color:#444;transform:scaleX(0.96);transform-origin:100% 50%;padding-right:3.5px;">40.32</div>
<div class="a" style="left:930.2px;top:309.2px;width:57.19999999999993px;height:16px;line-height:16px;text-align:right;font-size:10.4px;color:#444;transform:scaleX(0.96);transform-origin:100% 50%;padding-right:3.5px;">45 %</div>
<div class="a" style="left:987.4px;top:309.2px;width:61.19999999999993px;height:16px;line-height:16px;text-align:right;font-size:10.4px;color:#444;transform:scaleX(0.96);transform-origin:100% 50%;padding-right:3.5px;">149 %</div>
<div class="a" style="left:354px;top:325.2px;width:74.60000000000002px;height:16px;line-height:16px;text-align:left;font-size:10px;color:#444;padding-left:0px;">2/10/2023</div>
<div class="a" style="left:428.6px;top:325.2px;width:58.799999999999955px;height:16px;line-height:16px;text-align:right;font-size:10.4px;color:#444;transform:scaleX(0.96);transform-origin:100% 50%;padding-right:3.5px;">2,260</div>
<div class="a" style="left:487.4px;top:325.2px;width:48.89999999999998px;height:16px;line-height:16px;text-align:right;font-size:10.4px;color:#444;transform:scaleX(0.96);transform-origin:100% 50%;padding-right:3.5px;">2,990</div>
<div class="a" style="left:536.3px;top:325.2px;width:54.30000000000007px;height:16px;line-height:16px;text-align:right;font-size:10.4px;color:#444;transform:scaleX(0.96);transform-origin:100% 50%;padding-right:3.5px;">10</div>
<div class="a" style="left:590.6px;top:325.2px;width:52.10000000000002px;height:16px;line-height:16px;text-align:right;font-size:10.4px;color:#444;transform:scaleX(0.96);transform-origin:100% 50%;padding-right:3.5px;">2,980</div>
<div class="a" style="left:642.7px;top:325.2px;width:58.5px;height:16px;line-height:16px;text-align:right;font-size:10.4px;color:#444;transform:scaleX(0.96);transform-origin:100% 50%;padding-right:3.5px;">0.76</div>
<div class="a" style="left:701.2px;top:325.2px;width:56.39999999999998px;height:16px;line-height:16px;text-align:right;font-size:10.4px;color:#444;transform:scaleX(0.96);transform-origin:100% 50%;padding-right:3.5px;">0.76</div>
<div class="a" style="left:757.6px;top:325.2px;width:54.89999999999998px;height:16px;line-height:16px;text-align:right;font-size:10.4px;color:#444;transform:scaleX(0.96);transform-origin:100% 50%;padding-right:3.5px;">0.3 %</div>
<div class="a" style="left:812.5px;top:325.2px;width:51.299999999999955px;height:16px;line-height:16px;text-align:right;font-size:10.4px;color:#444;transform:scaleX(0.96);transform-origin:100% 50%;padding-right:3.5px;">44.70</div>
<div class="a" style="left:863.8px;top:325.2px;width:66.40000000000009px;height:16px;line-height:16px;text-align:right;font-size:10.4px;color:#444;transform:scaleX(0.96);transform-origin:100% 50%;padding-right:3.5px;">66.89</div>
<div class="a" style="left:930.2px;top:325.2px;width:57.19999999999993px;height:16px;line-height:16px;text-align:right;font-size:10.4px;color:#444;transform:scaleX(0.96);transform-origin:100% 50%;padding-right:3.5px;">17 %</div>
<div class="a" style="left:987.4px;top:325.2px;width:61.19999999999993px;height:16px;line-height:16px;text-align:right;font-size:10.4px;color:#444;transform:scaleX(0.96);transform-origin:100% 50%;padding-right:3.5px;">166 %</div>
<div class="a" style="left:354px;top:341.2px;width:74.60000000000002px;height:16px;line-height:16px;text-align:left;font-size:10px;color:#444;padding-left:0px;">2/11/2023</div>










<div class="a" style="left:987.4px;top:341.2px;width:61.19999999999993px;height:16px;line-height:16px;text-align:right;font-size:10.4px;color:#444;transform:scaleX(0.96);transform-origin:100% 50%;padding-right:3.5px;">166 %</div>
<div class="a" style="left:348px;top:357.2px;width:80.60000000000002px;height:16px;line-height:16px;text-align:left;font-size:10.4px;color:#252423;transform:scaleX(0.875);transform-origin:0 50%;font-weight:700;padding-left:0px;">Total</div>
<div class="a" style="left:428.6px;top:357.2px;width:58.799999999999955px;height:16px;line-height:16px;text-align:right;font-size:10.4px;color:#252423;font-weight:700;padding-right:3.5px;">21,044</div>
<div class="a" style="left:487.4px;top:357.2px;width:48.89999999999998px;height:16px;line-height:16px;text-align:right;font-size:10.4px;color:#252423;font-weight:700;padding-right:3.5px;">24,051</div>
<div class="a" style="left:536.3px;top:357.2px;width:54.30000000000007px;height:16px;line-height:16px;text-align:right;font-size:10.4px;color:#252423;font-weight:700;padding-right:3.5px;">145</div>
<div class="a" style="left:590.6px;top:357.2px;width:52.10000000000002px;height:16px;line-height:16px;text-align:right;font-size:10.4px;color:#252423;font-weight:700;padding-right:3.5px;">23,906</div>
<div class="a" style="left:642.7px;top:357.2px;width:58.5px;height:16px;line-height:16px;text-align:right;font-size:10.4px;color:#252423;font-weight:700;padding-right:3.5px;">0.87</div>
<div class="a" style="left:701.2px;top:357.2px;width:56.39999999999998px;height:16px;line-height:16px;text-align:right;font-size:10.4px;color:#252423;font-weight:700;padding-right:3.5px;">0.88</div>
<div class="a" style="left:757.6px;top:357.2px;width:54.89999999999998px;height:16px;line-height:16px;text-align:right;font-size:10.4px;color:#252423;font-weight:700;padding-right:3.5px;">0.6 %</div>
<div class="a" style="left:812.5px;top:357.2px;width:51.299999999999955px;height:16px;line-height:16px;text-align:right;font-size:10.4px;color:#252423;font-weight:700;padding-right:3.5px;">448.17</div>
<div class="a" style="left:863.8px;top:357.2px;width:66.40000000000009px;height:16px;line-height:16px;text-align:right;font-size:10.4px;color:#252423;font-weight:700;padding-right:3.5px;">53.66</div>
<div class="a" style="left:930.2px;top:357.2px;width:57.19999999999993px;height:16px;line-height:16px;text-align:right;font-size:10.4px;color:#252423;font-weight:700;padding-right:3.5px;">166 %</div>
<div class="a" style="left:987.4px;top:357.2px;width:61.19999999999993px;height:16px;line-height:16px;text-align:right;font-size:10.4px;color:#252423;font-weight:700;padding-right:3.5px;">166 %</div>

<!-- CAJAS POR CLASE -->
<div class="a" style="left:326px;top:389.5px;width:388px;height:154.5px;background:#fff;box-shadow:4px 5px 6px rgba(0,0,0,.3)"></div>
<div class="a" style="left:329.8px;top:389.2px;font-size:10.9px;font-weight:700;color:#252423;transform:scaleX(.9);transform-origin:0 0">CAJAS POR CLASE</div>
<div class="a" style="left:329.8px;top:404px;width:323.90000000000003px;height:22.4px;background:#252423"></div>
<div class="a" style="left:437.0px;top:404px;width:1px;height:22.4px;background:#3a3a3a"></div>
<div class="a" style="left:486.9px;top:404px;width:1px;height:22.4px;background:#3a3a3a"></div>
<div class="a" style="left:545.7px;top:404px;width:1px;height:22.4px;background:#3a3a3a"></div>
<div class="a" style="left:611.3px;top:404px;width:1px;height:22.4px;background:#3a3a3a"></div>
<div class="a" style="left:329.8px;top:443px;width:323.90000000000003px;height:16px;background:#ececec"></div>
<div class="a" style="left:329.8px;top:475px;width:323.90000000000003px;height:16px;background:#ececec"></div>
<div class="a" style="left:329.8px;top:507px;width:323.90000000000003px;height:16px;background:#ececec"></div>
<div class="a" style="left:329.8px;top:426.09999999999997px;width:323.90000000000003px;height:1.2px;background:#3a82d8"></div>
<div class="a" style="left:436.8px;top:426.4px;width:1.3px;height:112px;background:#7fb3ec"></div>
<div class="a" style="left:329.8px;top:402.2px;width:107.69999999999999px;height:22.4px;line-height:22.4px;text-align:center;font-size:10.2px;color:#fff;">Finca</div>
<div class="a" style="left:437.5px;top:402.2px;width:49.89999999999998px;height:22.4px;line-height:22.4px;text-align:center;font-size:10.2px;color:#fff;">Premium</div>
<div class="a" style="left:487.4px;top:402.2px;width:58.80000000000007px;height:22.4px;line-height:22.4px;text-align:center;font-size:10.2px;color:#fff;">Fruta corta</div>
<div class="a" style="left:546.2px;top:402.2px;width:65.59999999999991px;height:22.4px;line-height:22.4px;text-align:center;font-size:10.2px;color:#fff;">Second class</div>
<div class="a" style="left:611.8px;top:402.2px;width:41.90000000000009px;height:22.4px;line-height:22.4px;text-align:center;font-size:10.2px;color:#fff;font-weight:700;">Total</div>
<svg class="a" style="left:334px;top:431.5px" width="8" height="8" viewBox="0 0 8 8"><rect x=".5" y=".5" width="7" height="7" rx="1.3" stroke="#555" stroke-width=".8" fill="none"/><path d="M2 4 H6" stroke="#555" stroke-width=".9"/></svg>
<div class="a" style="left:350.3px;top:427.6px;width:87.19999999999999px;height:16px;line-height:16px;text-align:left;font-size:10px;color:#252423;font-weight:700;padding-left:0px;">Finca Casa Verde</div>
<div class="a" style="left:437.5px;top:427.6px;width:49.89999999999998px;height:16px;line-height:16px;text-align:right;font-size:10.5px;color:#252423;font-weight:700;padding-right:3.2px;">19,424</div>
<div class="a" style="left:487.4px;top:427.6px;width:58.80000000000007px;height:16px;line-height:16px;text-align:right;font-size:10.5px;color:#252423;font-weight:700;padding-right:3.2px;">1,216</div>
<div class="a" style="left:546.2px;top:427.6px;width:65.59999999999991px;height:16px;line-height:16px;text-align:right;font-size:10.5px;color:#252423;font-weight:700;padding-right:3.2px;">404</div>
<div class="a" style="left:611.8px;top:427.6px;width:41.90000000000009px;height:16px;line-height:16px;text-align:right;font-size:10.5px;color:#252423;font-weight:700;padding-right:3.2px;">21,044</div>
<div class="a" style="left:356.8px;top:443.6px;width:80.69999999999999px;height:16px;line-height:16px;text-align:left;font-size:10.7px;color:#444;padding-left:0px;">2/6/2023</div>
<div class="a" style="left:437.5px;top:443.6px;width:49.89999999999998px;height:16px;line-height:16px;text-align:right;font-size:10.3px;color:#444;transform:scaleX(0.97);transform-origin:100% 50%;padding-right:3.2px;">4,672</div>
<div class="a" style="left:487.4px;top:443.6px;width:58.80000000000007px;height:16px;line-height:16px;text-align:right;font-size:10.3px;color:#444;transform:scaleX(0.97);transform-origin:100% 50%;padding-right:3.2px;">388</div>
<div class="a" style="left:546.2px;top:443.6px;width:65.59999999999991px;height:16px;line-height:16px;text-align:right;font-size:10.3px;color:#444;transform:scaleX(0.97);transform-origin:100% 50%;padding-right:3.2px;">148</div>
<div class="a" style="left:611.8px;top:443.6px;width:41.90000000000009px;height:16px;line-height:16px;text-align:right;font-size:10.5px;color:#252423;font-weight:700;padding-right:3.2px;">5,208</div>
<div class="a" style="left:356.8px;top:459.6px;width:80.69999999999999px;height:16px;line-height:16px;text-align:left;font-size:10.7px;color:#444;padding-left:0px;">2/7/2023</div>
<div class="a" style="left:437.5px;top:459.6px;width:49.89999999999998px;height:16px;line-height:16px;text-align:right;font-size:10.3px;color:#444;transform:scaleX(0.97);transform-origin:100% 50%;padding-right:3.2px;">4,572</div>
<div class="a" style="left:487.4px;top:459.6px;width:58.80000000000007px;height:16px;line-height:16px;text-align:right;font-size:10.3px;color:#444;transform:scaleX(0.97);transform-origin:100% 50%;padding-right:3.2px;">388</div>
<div class="a" style="left:546.2px;top:459.6px;width:65.59999999999991px;height:16px;line-height:16px;text-align:right;font-size:10.3px;color:#444;transform:scaleX(0.97);transform-origin:100% 50%;padding-right:3.2px;">60</div>
<div class="a" style="left:611.8px;top:459.6px;width:41.90000000000009px;height:16px;line-height:16px;text-align:right;font-size:10.5px;color:#252423;font-weight:700;padding-right:3.2px;">5,020</div>
<div class="a" style="left:356.8px;top:475.6px;width:80.69999999999999px;height:16px;line-height:16px;text-align:left;font-size:10.7px;color:#444;padding-left:0px;">2/8/2023</div>
<div class="a" style="left:437.5px;top:475.6px;width:49.89999999999998px;height:16px;line-height:16px;text-align:right;font-size:10.3px;color:#444;transform:scaleX(0.97);transform-origin:100% 50%;padding-right:3.2px;">3,788</div>
<div class="a" style="left:487.4px;top:475.6px;width:58.80000000000007px;height:16px;line-height:16px;text-align:right;font-size:10.3px;color:#444;transform:scaleX(0.97);transform-origin:100% 50%;padding-right:3.2px;">440</div>

<div class="a" style="left:611.8px;top:475.6px;width:41.90000000000009px;height:16px;line-height:16px;text-align:right;font-size:10.5px;color:#252423;font-weight:700;padding-right:3.2px;">4,228</div>
<div class="a" style="left:356.8px;top:491.6px;width:80.69999999999999px;height:16px;line-height:16px;text-align:left;font-size:10.7px;color:#444;padding-left:0px;">2/9/2023</div>
<div class="a" style="left:437.5px;top:491.6px;width:49.89999999999998px;height:16px;line-height:16px;text-align:right;font-size:10.3px;color:#444;transform:scaleX(0.97);transform-origin:100% 50%;padding-right:3.2px;">4,132</div>

<div class="a" style="left:546.2px;top:491.6px;width:65.59999999999991px;height:16px;line-height:16px;text-align:right;font-size:10.3px;color:#444;transform:scaleX(0.97);transform-origin:100% 50%;padding-right:3.2px;">196</div>
<div class="a" style="left:611.8px;top:491.6px;width:41.90000000000009px;height:16px;line-height:16px;text-align:right;font-size:10.5px;color:#252423;font-weight:700;padding-right:3.2px;">4,328</div>
<div class="a" style="left:356.8px;top:507.6px;width:80.69999999999999px;height:16px;line-height:16px;text-align:left;font-size:10.7px;color:#444;padding-left:0px;">2/10/2023</div>
<div class="a" style="left:437.5px;top:507.6px;width:49.89999999999998px;height:16px;line-height:16px;text-align:right;font-size:10.3px;color:#444;transform:scaleX(0.97);transform-origin:100% 50%;padding-right:3.2px;">2,260</div>


<div class="a" style="left:611.8px;top:507.6px;width:41.90000000000009px;height:16px;line-height:16px;text-align:right;font-size:10.5px;color:#252423;font-weight:700;padding-right:3.2px;">2,260</div>
<div class="a" style="left:350.8px;top:523.6px;width:86.69999999999999px;height:16px;line-height:16px;text-align:left;font-size:10px;color:#252423;font-weight:700;padding-left:0px;">Total</div>
<div class="a" style="left:437.5px;top:523.6px;width:49.89999999999998px;height:16px;line-height:16px;text-align:right;font-size:10.5px;color:#252423;font-weight:700;padding-right:3.2px;">19,424</div>
<div class="a" style="left:487.4px;top:523.6px;width:58.80000000000007px;height:16px;line-height:16px;text-align:right;font-size:10.5px;color:#252423;font-weight:700;padding-right:3.2px;">1,216</div>
<div class="a" style="left:546.2px;top:523.6px;width:65.59999999999991px;height:16px;line-height:16px;text-align:right;font-size:10.5px;color:#252423;font-weight:700;padding-right:3.2px;">404</div>
<div class="a" style="left:611.8px;top:523.6px;width:41.90000000000009px;height:16px;line-height:16px;text-align:right;font-size:10.5px;color:#252423;font-weight:700;padding-right:3.2px;">21,044</div>

<!-- COSECHADOS -->
<div class="a" style="left:723px;top:390px;width:356.5px;height:154.5px;background:#fff;box-shadow:4px 5px 6px rgba(0,0,0,.3)"></div>
<div class="a" style="left:726.8px;top:389.6px;font-size:10.8px;font-weight:700;color:#252423;transform:scaleX(.9);transform-origin:0 0">COSECHADOS POR EDAD</div>
<div class="a" style="left:726.1px;top:404px;width:319.9999999999999px;height:22.4px;background:#252423"></div>
<div class="a" style="left:834.1px;top:404px;width:1px;height:22.4px;background:#3a3a3a"></div>
<div class="a" style="left:859.8px;top:404px;width:1px;height:22.4px;background:#3a3a3a"></div>
<div class="a" style="left:894.5px;top:404px;width:1px;height:22.4px;background:#3a3a3a"></div>
<div class="a" style="left:928.9px;top:404px;width:1px;height:22.4px;background:#3a3a3a"></div>
<div class="a" style="left:970.1px;top:404px;width:1px;height:22.4px;background:#3a3a3a"></div>
<div class="a" style="left:1004.4px;top:404px;width:1px;height:22.4px;background:#3a3a3a"></div>
<div class="a" style="left:726.1px;top:443px;width:319.9999999999999px;height:16px;background:#ececec"></div>
<div class="a" style="left:726.1px;top:475px;width:319.9999999999999px;height:16px;background:#ececec"></div>
<div class="a" style="left:726.1px;top:507px;width:319.9999999999999px;height:16px;background:#ececec"></div>
<div class="a" style="left:726.1px;top:426.09999999999997px;width:319.9999999999999px;height:1.2px;background:#3a82d8"></div>
<div class="a" style="left:833.9px;top:426.4px;width:1.3px;height:112px;background:#7fb3ec"></div>
<div class="a" style="left:726.1px;top:402.2px;width:108.5px;height:22.4px;line-height:22.4px;text-align:center;font-size:10.2px;color:#fff;">Finca</div>
<div class="a" style="left:834.6px;top:402.2px;width:25.699999999999932px;height:22.4px;line-height:22.4px;text-align:center;font-size:10.2px;color:#fff;">8</div>
<div class="a" style="left:860.3px;top:402.2px;width:34.700000000000045px;height:22.4px;line-height:22.4px;text-align:center;font-size:10.2px;color:#fff;">9</div>
<div class="a" style="left:895px;top:402.2px;width:34.39999999999998px;height:22.4px;line-height:22.4px;text-align:center;font-size:10.2px;color:#fff;">10</div>
<div class="a" style="left:929.4px;top:402.2px;width:41.200000000000045px;height:22.4px;line-height:22.4px;text-align:center;font-size:10.2px;color:#fff;">11</div>
<div class="a" style="left:970.6px;top:402.2px;width:34.299999999999955px;height:22.4px;line-height:22.4px;text-align:center;font-size:10.2px;color:#fff;">12</div>
<div class="a" style="left:1004.9px;top:402.2px;width:41.19999999999993px;height:22.4px;line-height:22.4px;text-align:center;font-size:10.2px;color:#fff;font-weight:700;">Total</div>
<svg class="a" style="left:731px;top:431.5px" width="8" height="8" viewBox="0 0 8 8"><rect x=".5" y=".5" width="7" height="7" rx="1.3" stroke="#555" stroke-width=".8" fill="none"/><path d="M2 4 H6" stroke="#555" stroke-width=".9"/></svg>
<div class="a" style="left:746.6px;top:427.6px;width:88.0px;height:16px;line-height:16px;text-align:left;font-size:10px;color:#252423;font-weight:700;padding-left:0px;">Finca Casa Verde</div>
<div class="a" style="left:834.6px;top:427.6px;width:25.699999999999932px;height:16px;line-height:16px;text-align:right;font-size:10.5px;color:#252423;font-weight:700;padding-right:3.5px;">106</div>
<div class="a" style="left:860.3px;top:427.6px;width:34.700000000000045px;height:16px;line-height:16px;text-align:right;font-size:10.5px;color:#252423;font-weight:700;padding-right:3.5px;">1,406</div>
<div class="a" style="left:895px;top:427.6px;width:34.39999999999998px;height:16px;line-height:16px;text-align:right;font-size:10.5px;color:#252423;font-weight:700;padding-right:3.5px;">4,893</div>
<div class="a" style="left:929.4px;top:427.6px;width:41.200000000000045px;height:16px;line-height:16px;text-align:right;font-size:10.5px;color:#252423;font-weight:700;padding-right:3.5px;">11,986</div>
<div class="a" style="left:970.6px;top:427.6px;width:34.299999999999955px;height:16px;line-height:16px;text-align:right;font-size:10.5px;color:#252423;font-weight:700;padding-right:3.5px;">5,660</div>
<div class="a" style="left:1004.9px;top:427.6px;width:41.19999999999993px;height:16px;line-height:16px;text-align:right;font-size:10.5px;color:#252423;font-weight:700;padding-right:3.5px;">24,051</div>
<div class="a" style="left:753.1px;top:443.6px;width:81.5px;height:16px;line-height:16px;text-align:left;font-size:10.7px;color:#444;padding-left:0px;">2/6/2023</div>

<div class="a" style="left:860.3px;top:443.6px;width:34.700000000000045px;height:16px;line-height:16px;text-align:right;font-size:10.3px;color:#444;transform:scaleX(0.97);transform-origin:100% 50%;padding-right:3.5px;">102</div>
<div class="a" style="left:895px;top:443.6px;width:34.39999999999998px;height:16px;line-height:16px;text-align:right;font-size:10.3px;color:#444;transform:scaleX(0.97);transform-origin:100% 50%;padding-right:3.5px;">820</div>
<div class="a" style="left:929.4px;top:443.6px;width:41.200000000000045px;height:16px;line-height:16px;text-align:right;font-size:10.3px;color:#444;transform:scaleX(0.97);transform-origin:100% 50%;padding-right:3.5px;">2,823</div>
<div class="a" style="left:970.6px;top:443.6px;width:34.299999999999955px;height:16px;line-height:16px;text-align:right;font-size:10.3px;color:#444;transform:scaleX(0.97);transform-origin:100% 50%;padding-right:3.5px;">2,030</div>
<div class="a" style="left:1004.9px;top:443.6px;width:41.19999999999993px;height:16px;line-height:16px;text-align:right;font-size:10.5px;color:#252423;font-weight:700;padding-right:3.5px;">5,775</div>
<div class="a" style="left:753.1px;top:459.6px;width:81.5px;height:16px;line-height:16px;text-align:left;font-size:10.7px;color:#444;padding-left:0px;">2/7/2023</div>

<div class="a" style="left:860.3px;top:459.6px;width:34.700000000000045px;height:16px;line-height:16px;text-align:right;font-size:10.3px;color:#444;transform:scaleX(0.97);transform-origin:100% 50%;padding-right:3.5px;">117</div>

<div class="a" style="left:929.4px;top:459.6px;width:41.200000000000045px;height:16px;line-height:16px;text-align:right;font-size:10.3px;color:#444;transform:scaleX(0.97);transform-origin:100% 50%;padding-right:3.5px;">3,940</div>
<div class="a" style="left:970.6px;top:459.6px;width:34.299999999999955px;height:16px;line-height:16px;text-align:right;font-size:10.3px;color:#444;transform:scaleX(0.97);transform-origin:100% 50%;padding-right:3.5px;">1,583</div>
<div class="a" style="left:1004.9px;top:459.6px;width:41.19999999999993px;height:16px;line-height:16px;text-align:right;font-size:10.5px;color:#252423;font-weight:700;padding-right:3.5px;">5,640</div>
<div class="a" style="left:753.1px;top:475.6px;width:81.5px;height:16px;line-height:16px;text-align:left;font-size:10.7px;color:#444;padding-left:0px;">2/8/2023</div>

<div class="a" style="left:860.3px;top:475.6px;width:34.700000000000045px;height:16px;line-height:16px;text-align:right;font-size:10.3px;color:#444;transform:scaleX(0.97);transform-origin:100% 50%;padding-right:3.5px;">329</div>
<div class="a" style="left:895px;top:475.6px;width:34.39999999999998px;height:16px;line-height:16px;text-align:right;font-size:10.3px;color:#444;transform:scaleX(0.97);transform-origin:100% 50%;padding-right:3.5px;">862</div>
<div class="a" style="left:929.4px;top:475.6px;width:41.200000000000045px;height:16px;line-height:16px;text-align:right;font-size:10.3px;color:#444;transform:scaleX(0.97);transform-origin:100% 50%;padding-right:3.5px;">2,079</div>
<div class="a" style="left:970.6px;top:475.6px;width:34.299999999999955px;height:16px;line-height:16px;text-align:right;font-size:10.3px;color:#444;transform:scaleX(0.97);transform-origin:100% 50%;padding-right:3.5px;">1,447</div>
<div class="a" style="left:1004.9px;top:475.6px;width:41.19999999999993px;height:16px;line-height:16px;text-align:right;font-size:10.5px;color:#252423;font-weight:700;padding-right:3.5px;">4,717</div>
<div class="a" style="left:753.1px;top:491.6px;width:81.5px;height:16px;line-height:16px;text-align:left;font-size:10.7px;color:#444;padding-left:0px;">2/9/2023</div>

<div class="a" style="left:860.3px;top:491.6px;width:34.700000000000045px;height:16px;line-height:16px;text-align:right;font-size:10.3px;color:#444;transform:scaleX(0.97);transform-origin:100% 50%;padding-right:3.5px;">353</div>
<div class="a" style="left:895px;top:491.6px;width:34.39999999999998px;height:16px;line-height:16px;text-align:right;font-size:10.3px;color:#444;transform:scaleX(0.97);transform-origin:100% 50%;padding-right:3.5px;">1,879</div>
<div class="a" style="left:929.4px;top:491.6px;width:41.200000000000045px;height:16px;line-height:16px;text-align:right;font-size:10.3px;color:#444;transform:scaleX(0.97);transform-origin:100% 50%;padding-right:3.5px;">2,097</div>
<div class="a" style="left:970.6px;top:491.6px;width:34.299999999999955px;height:16px;line-height:16px;text-align:right;font-size:10.3px;color:#444;transform:scaleX(0.97);transform-origin:100% 50%;padding-right:3.5px;">600</div>
<div class="a" style="left:1004.9px;top:491.6px;width:41.19999999999993px;height:16px;line-height:16px;text-align:right;font-size:10.5px;color:#252423;font-weight:700;padding-right:3.5px;">4,929</div>
<div class="a" style="left:753.1px;top:507.6px;width:81.5px;height:16px;line-height:16px;text-align:left;font-size:10.7px;color:#444;padding-left:0px;">2/10/2023</div>
<div class="a" style="left:834.6px;top:507.6px;width:25.699999999999932px;height:16px;line-height:16px;text-align:right;font-size:10.3px;color:#444;transform:scaleX(0.97);transform-origin:100% 50%;padding-right:3.5px;">106</div>
<div class="a" style="left:860.3px;top:507.6px;width:34.700000000000045px;height:16px;line-height:16px;text-align:right;font-size:10.3px;color:#444;transform:scaleX(0.97);transform-origin:100% 50%;padding-right:3.5px;">505</div>
<div class="a" style="left:895px;top:507.6px;width:34.39999999999998px;height:16px;line-height:16px;text-align:right;font-size:10.3px;color:#444;transform:scaleX(0.97);transform-origin:100% 50%;padding-right:3.5px;">1,332</div>
<div class="a" style="left:929.4px;top:507.6px;width:41.200000000000045px;height:16px;line-height:16px;text-align:right;font-size:10.3px;color:#444;transform:scaleX(0.97);transform-origin:100% 50%;padding-right:3.5px;">1,047</div>

<div class="a" style="left:1004.9px;top:507.6px;width:41.19999999999993px;height:16px;line-height:16px;text-align:right;font-size:10.5px;color:#252423;font-weight:700;padding-right:3.5px;">2,990</div>
<div class="a" style="left:746.6px;top:523.6px;width:88.0px;height:16px;line-height:16px;text-align:left;font-size:10px;color:#252423;font-weight:700;padding-left:0px;">Total</div>
<div class="a" style="left:834.6px;top:523.6px;width:25.699999999999932px;height:16px;line-height:16px;text-align:right;font-size:10.5px;color:#252423;font-weight:700;padding-right:3.5px;">106</div>
<div class="a" style="left:860.3px;top:523.6px;width:34.700000000000045px;height:16px;line-height:16px;text-align:right;font-size:10.5px;color:#252423;font-weight:700;padding-right:3.5px;">1,406</div>
<div class="a" style="left:895px;top:523.6px;width:34.39999999999998px;height:16px;line-height:16px;text-align:right;font-size:10.5px;color:#252423;font-weight:700;padding-right:3.5px;">4,893</div>
<div class="a" style="left:929.4px;top:523.6px;width:41.200000000000045px;height:16px;line-height:16px;text-align:right;font-size:10.5px;color:#252423;font-weight:700;padding-right:3.5px;">11,986</div>
<div class="a" style="left:970.6px;top:523.6px;width:34.299999999999955px;height:16px;line-height:16px;text-align:right;font-size:10.5px;color:#252423;font-weight:700;padding-right:3.5px;">5,660</div>
<div class="a" style="left:1004.9px;top:523.6px;width:41.19999999999993px;height:16px;line-height:16px;text-align:right;font-size:10.5px;color:#252423;font-weight:700;padding-right:3.5px;">24,051</div>

</body></html>
